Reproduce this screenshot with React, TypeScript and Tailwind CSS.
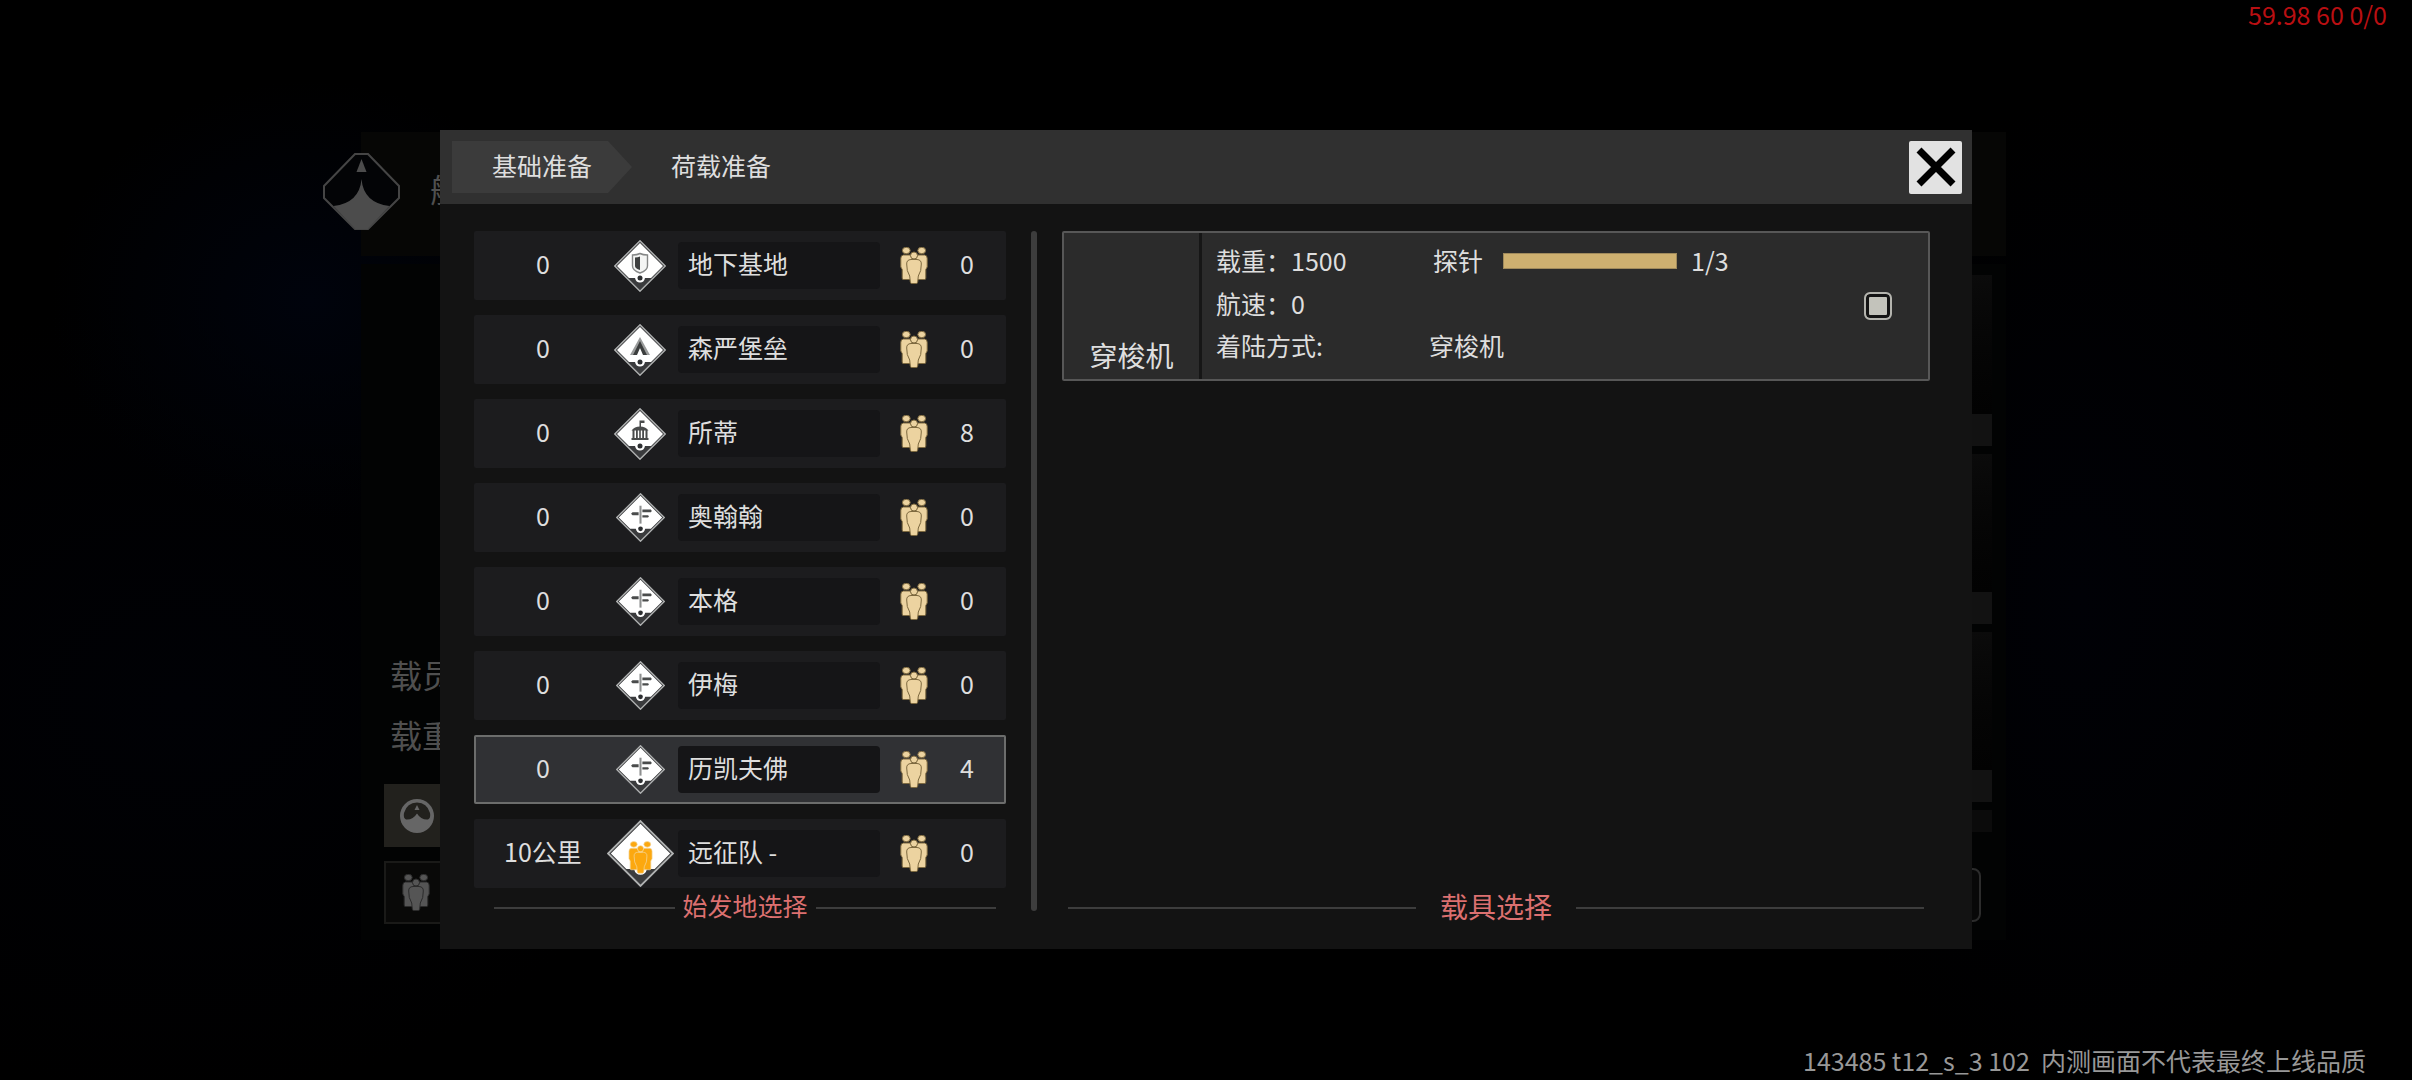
import { ReactElement } from "react";
import clsx from "clsx";

type Kind = "shield" | "tent" | "hall" | "sign" | "team";

type Origin = {
	id: number;
	distance: string;
	kind: Kind;
	name: string;
	crew: number;
};

const ORIGINS: Origin[] = [
	{ id: 1, distance: "0", kind: "shield", name: "地下基地", crew: 0 },
	{ id: 2, distance: "0", kind: "tent", name: "森严堡垒", crew: 0 },
	{ id: 3, distance: "0", kind: "hall", name: "所蒂", crew: 8 },
	{ id: 4, distance: "0", kind: "sign", name: "奥翰翰", crew: 0 },
	{ id: 5, distance: "0", kind: "sign", name: "本格", crew: 0 },
	{ id: 6, distance: "0", kind: "sign", name: "伊梅", crew: 0 },
	{ id: 7, distance: "0", kind: "sign", name: "历凯夫佛", crew: 4 },
	{ id: 8, distance: "10公里", kind: "team", name: "远征队 -", crew: 0 },
];

const SELECTED_ID = 7;

function PeopleShapes(): ReactElement {
	return (
		<>
			<ellipse cx="6.3" cy="3.5" rx="3.9" ry="3.2" />
			<ellipse cx="21.7" cy="3.5" rx="3.9" ry="3.2" />
			<path d="M3.5 8H10l2 3v21.500H3.500q-1.300 0-1.300-1.500v-8.500L.8 20v-8.500Q.8 8.200 3.500 8z" />
			<path d="M24.500 8H18l-2 3v21.500h8.500q1.300 0 1.300-1.500v-8.500l1.400-2.500v-8.500Q27.200 8.200 24.500 8z" />
			<path d="M11 12.500h6q4.500.3 4.300 4.500l-.6 6.500-2.400 5.500-.6 6q-.2 1.500-1.500 1.500h-4.400q-1.300 0-1.500-1.500l-.6-6-2.400-5.500L6.700 17q-.2-4.200 4.300-4.500z" />
			<ellipse cx="14" cy="8.500" rx="3.500" ry="3.500" />
		</>
	);
}

function PeopleIcon({ className }: { className?: string }): ReactElement {
	return (
		<svg
			viewBox="0 0 28 37"
			className={clsx("h-[37px] w-[28px] shrink-0", className)}
			strokeWidth="1"
			aria-hidden="true"
		>
			<PeopleShapes />
		</svg>
	);
}

function Emblem({ kind }: { kind: Kind }): ReactElement {
	switch (kind) {
		case "shield":
			return (
				<g>
					<path
						d="M18.500 15q4.500 0 7.500-1.500 3 1.500 7.500 1.500v11q0 4.500-7.500 7-7.500-2.500-7.500-7z"
						fill="#f4f5f4"
						stroke="#858787"
						strokeWidth="1.4"
					/>
					<path d="M21 17.500q3 0 5-1v13.500q-5-1.500-5-4z" fill="#3d3f3f" />
				</g>
			);
		case "tent":
			return (
				<g>
					<path d="M26 13l10 18h-6l-4-8-4 8h-6z" fill="#9a9c9c" />
					<path d="M26 17l7 14h-4l-3-7-3 7h-4z" fill="#3c3e3e" />
				</g>
			);
		case "hall":
			return (
				<g fill="#4a4c4c">
					<path d="M25.500 19v-6.500h5v2.500h-3.500V19z" />
					<path d="M17.500 22.500q3-4 8.500-4t8.500 4z" />
					<path d="M18.500 22h2v8h-2zM22 22h1.800v8H22zM25.200 22h1.600v8h-1.600zM28.200 22H30v8h-1.800zM31.500 22h2v8h-2z" />
					<path d="M17.500 30h17v2h-17z" />
				</g>
			);
		case "sign":
			return (
				<g fill="#4a4c4c">
					<path d="M24.900 13.500h2.200v19h-2.200z" fill="#8d8f8f" />
					<path d="M28 17.500h9l1 1.500-1 1.500h-9zM28 23.500h6l1 1.200-1 1.300h-6zM24 20.500h-6.500L16 22l1.500 1.500H24z" />
				</g>
			);
		case "team":
			return (
				<g
					transform="translate(16.500 16.500) scale(.68)"
					fill="#fca80f"
					stroke="#f3d9a0"
					strokeWidth=".8"
				>
					<PeopleShapes />
				</g>
			);
	}
}

function PlaceIcon({ kind }: { kind: Kind }): ReactElement {
	return (
		<svg
			viewBox="0 0 52 52"
			className={clsx(
				"shrink-0",
				kind === "team" && "size-[67px]",
				kind === "sign" && "size-[49px]",
				kind !== "team" && kind !== "sign" && "size-[52px]",
			)}
			aria-hidden="true"
		>
			<path d="M26 .8L51.200 26 26 51.200.8 26z" fill="#3a3b3d" stroke="#b0b2b2" strokeWidth="1.4" />
			<path d="M26 3L49 26 37 38h-6q-1 4.500-5 4.500T21 38h-6L3 26z" fill="#fff" />
			<circle cx="26" cy="38" r="2.500" fill="#2d2f31" />
			<Emblem kind={kind} />
		</svg>
	);
}

function OriginRow({ origin, selected }: { origin: Origin; selected: boolean }): ReactElement {
	return (
		<li>
			<button
				type="button"
				aria-pressed={selected}
				className={clsx(
					"flex h-[69px] w-full items-center rounded-xs text-center outline-2 -outline-offset-2",
					selected ? "bg-[#303134] outline-[#6c6d6c]" : "bg-[#1c1c1e] outline-transparent",
				)}
			>
				<span className="w-[138px] shrink-0 pb-1">{origin.distance}</span>
				<span className="flex w-14 shrink-0 justify-center">
					<PlaceIcon kind={origin.kind} />
				</span>
				<span className="ml-2.5 flex h-[47px] flex-1 items-center rounded bg-[#151517] pb-1 pl-2.5">
					{origin.name}
				</span>
				<PeopleIcon className="ml-5 fill-[#ecd3a0] stroke-[#7d693f]" />
				<span className="w-[78px] shrink-0 pb-1">{origin.crew}</span>
			</button>
		</li>
	);
}

function SectionTitle({ children, className }: { children: string; className?: string }): ReactElement {
	return (
		<h2 className={clsx("flex h-10 items-center text-[#dc7070]", className)}>
			<span className="h-0.5 flex-1 bg-[#3d3d3d]" />
			<span className="pb-1">{children}</span>
			<span className="h-0.5 flex-1 bg-[#3d3d3d]" />
		</h2>
	);
}

function VehicleCard(): ReactElement {
	return (
		<article className="flex h-[150px] items-stretch rounded-xs border-2 border-[#575757] bg-[#2b2b2b]">
			<h3 className="flex w-[138px] items-end justify-center border-r-3 border-[#161616] pb-1 text-[28px] leading-10">
				穿梭机
			</h3>
			<dl className="grid flex-1 grid-cols-[213px_1fr] content-start pt-1.5 pl-3.5 leading-[43px]">
				<div className="flex">
					<dt>载重：</dt>
					<dd>1500</dd>
				</div>
				<div className="flex items-center pl-1">
					<dt>探针</dt>
					<dd className="flex items-center">
						<span className="mr-3.5 ml-5 h-4 w-[174px] border border-[#a08a5c] bg-[#ceb070]" />
						1/3
					</dd>
				</div>
				<div className="col-span-2 flex">
					<dt>航速：</dt>
					<dd>0</dd>
				</div>
				<dt className="leading-10">着陆方式:</dt>
				<dd className="leading-10">穿梭机</dd>
			</dl>
			<input
				type="checkbox"
				defaultChecked
				aria-label="选择穿梭机"
				className="mr-9 size-7 appearance-none self-center rounded-md border-2 border-[#b4b4ae] bg-[#c3c3bb] shadow-[inset_0_0_0_3px_#141414]"
			/>
		</article>
	);
}

function ShipPanel(): ReactElement {
	return (
		<section className="col-start-1 row-start-1 flex justify-center text-[32px] text-[#4f4f4f]" aria-hidden="true">
			<div className="relative mr-[45px] flex w-full max-w-[1645px] flex-col gap-2 pt-0.5">
				<div className="flex h-[124px] bg-[#060605] pt-8 pl-[69px] leading-[48px]">
					<svg viewBox="0 0 77 77" className="absolute top-[23px] -left-[38px] size-[77px]">
						<path
							d="M32 1h13l31 32v12L45 76H32L1 45V33z"
							fill="#030406"
							stroke="#454545"
							strokeWidth="2"
						/>
						<path d="M38.500 6l5 13h-10z" fill="#4c4c4c" />
						<path d="M38.500 26q2 24 28 27L44.500 76h-12L10.500 53q26-3 28-27z" fill="#4c4c4c" />
					</svg>
					舰船
				</div>
				<div className="flex h-[676px] justify-between bg-[#020303]">
					<div className="pt-[380px] pl-[23px]">
						<p className="pl-1.5 leading-[60px]">载员</p>
						<p className="pl-1.5 leading-[60px]">载重</p>
						<div className="mt-5 flex h-[63px] w-24 items-center bg-[#22211d] pl-4">
							<svg viewBox="0 0 34 34" className="size-[34px]">
								<circle cx="17" cy="17" r="17" fill="#666" />
								<path
									d="M17 3.500Q27 3.500 30 14q1 5-2 6.500-7 .5-11-6-4 6.500-11 6Q3 19 4 14 7 3.500 17 3.500z"
									fill="#22211d"
								/>
								<path d="M17 6l2.500 5h-5z" fill="#666" />
							</svg>
						</div>
						<div className="mt-3.5 flex h-[63px] w-24 items-center border-2 border-[#1a1a18] bg-[#090908] pl-4">
							<PeopleIcon className="fill-[#555] stroke-[#2b2b2b]" />
						</div>
					</div>
					<div className="mr-3.5 flex w-24 flex-col gap-2 pt-[11px]">
						<div>
							<div className="h-[139px] bg-linear-to-b from-[#0b0b0b] to-[#020202]" />
							<div className="h-8 bg-[#121212]" />
						</div>
						<div>
							<div className="h-[138px] bg-linear-to-b from-[#0b0b0b] to-[#020202]" />
							<div className="h-8 bg-[#121212]" />
						</div>
						<div>
							<div className="h-[138px] bg-linear-to-b from-[#0b0b0b] to-[#020202]" />
							<div className="h-8 bg-[#121212]" />
						</div>
						<div className="h-[22px] bg-[#0b0b0b]" />
						<div className="mt-7 mr-[11px] h-[54px] rounded-lg border-2 border-[#2c2c2c] bg-[#080808]" />
					</div>
				</div>
			</div>
		</section>
	);
}

export default function App(): ReactElement {
	return (
		<div className="flex min-h-screen flex-col bg-black bg-[radial-gradient(ellipse_260px_220px_at_310px_300px,#00030c,transparent),radial-gradient(ellipse_300px_500px_at_2080px_600px,#000106,transparent),radial-gradient(ellipse_500px_400px_at_180px_700px,#000105,transparent)] font-['Noto_Sans_CJK_SC',sans-serif] text-[25px] text-[#dedede]">
			<p className="flex h-[130px] items-start justify-end pr-[25px] leading-7 text-[#b90f12]">
				59.98 60 0/0
			</p>
			<main className="grid grid-cols-1">
				<ShipPanel />
				<section className="z-10 col-start-1 row-start-1 mx-auto w-full max-w-[1532px] self-start bg-[#131313]">
					<header className="flex h-[74px] items-center justify-between bg-[#303030] pr-2.5 pl-3">
						<nav className="flex items-center">
							<button
								type="button"
								className="h-[52px] w-[180px] bg-[#3b3b3b] pb-0.5 text-center [clip-path:polygon(0_0,156px_0,100%_50%,156px_100%,0_100%)]"
							>
								基础准备
							</button>
							<button type="button" className="h-[52px] w-[178px] pb-0.5 text-center">
								荷载准备
							</button>
						</nav>
						<button
							type="button"
							aria-label="关闭"
							className="flex size-[53px] items-center justify-center rounded-xs bg-[#e2e2e2]"
						>
							<svg viewBox="0 0 40 40" className="size-10" stroke="#000" strokeWidth="7">
								<path d="M3 3l34 34M37 3L3 37" />
							</svg>
						</button>
					</header>
					<div className="flex pt-[27px] pr-[42px] pb-[21px] pl-[34px]">
						<div className="w-[532px] shrink-0">
							<ul className="flex flex-col gap-[15px]">
								{ORIGINS.map((origin) => (
									<OriginRow
										key={origin.id}
										origin={origin}
										selected={origin.id === SELECTED_ID}
									/>
								))}
							</ul>
							<SectionTitle className="mr-2.5 ml-5 gap-2">始发地选择</SectionTitle>
						</div>
						<div className="mx-[25px] mb-[17px] w-1.5 rounded-full bg-[#3d3d3d]" />
						<div className="flex min-w-0 flex-1 flex-col justify-between">
							<VehicleCard />
							<SectionTitle className="mx-1.5 gap-6 text-[28px]">载具选择</SectionTitle>
						</div>
					</div>
				</section>
			</main>
			<footer className="mt-auto flex justify-end pr-[46px] pb-0.5 leading-9 whitespace-pre text-[#989898]">
				143485 t12_s_3 102{"  "}内测画面不代表最终上线品质
			</footer>
		</div>
	);
}
